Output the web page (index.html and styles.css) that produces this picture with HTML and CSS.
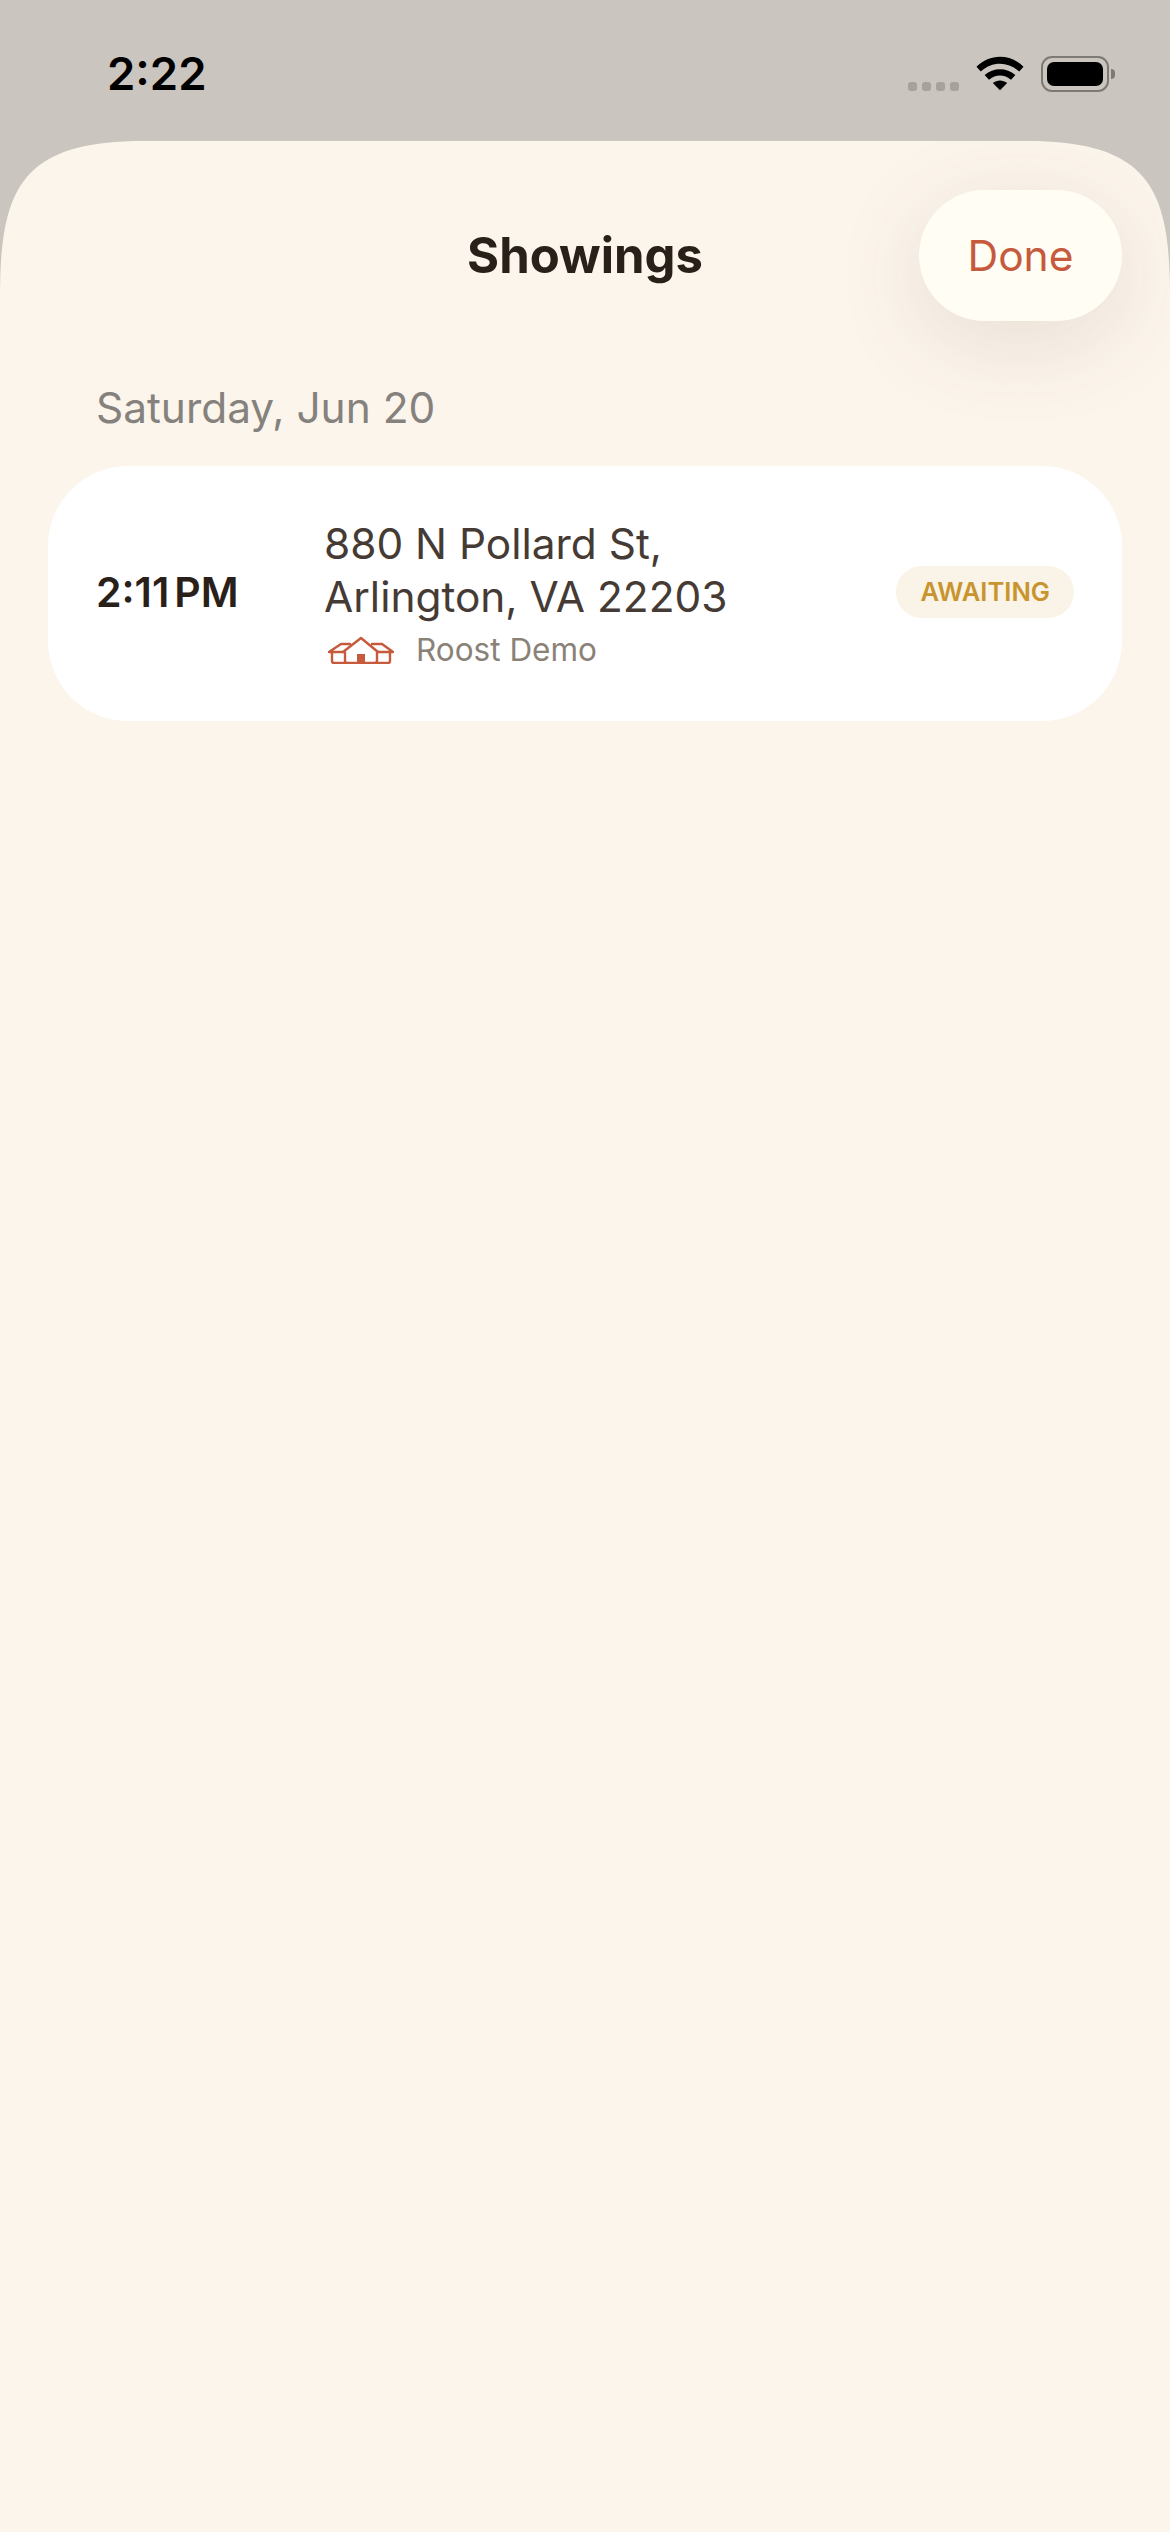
FILE: index.html
```html
<!DOCTYPE html>
<html lang="en">
<head>
    <meta charset="UTF-8">
    <meta name="viewport" content="width=device-width, initial-scale=1.0">
    <title>Showings</title>
    <link rel="stylesheet" href="styles.css">
</head>
<body>
    <div class="status-bar">
        <span class="status-time">2:22</span>
        <div class="status-icons">
            <div class="signal-dots">
                <span></span><span></span><span></span><span></span>
            </div>
            <svg class="wifi" width="48" height="36" viewBox="0 0 50 36">
                <path d="M0.5 11.5 C14 -2.5 36 -2.5 49.5 11.5 L45 16.5 C33.5 5.5 16.500 5.500 5 16.500 Z" fill="#000"/>
                <path d="M9 20 C18 12 32 12 41 20 L36.500 25 C29.500 19 20.500 19 13.500 25 Z" fill="#000"/>
                <path d="M17.500 28.500 C22 25 28 25 32.500 28.500 L25 36 Z" fill="#000"/>
            </svg>
            <div class="battery">
                <div class="battery-body"><div class="battery-level"></div></div>
                <div class="battery-cap"></div>
            </div>
        </div>
    </div>

    <main class="sheet">
        <header class="sheet-header">
            <h1 class="sheet-title">Showings</h1>
            <button class="done-btn" type="button">Done</button>
        </header>

        <h2 class="date-label">Saturday, Jun 20</h2>

        <section class="showing-card">
            <div class="showing-time">2:11<span class="time-suffix">PM</span></div>
            <div class="showing-info">
                <div class="showing-address">880 N Pollard St,<br>Arlington, VA 22203</div>
                <div class="showing-client">
                    <svg class="house-icon" width="66" height="28" viewBox="0 0 66 28">
                        <g fill="none" stroke="#c55a3c" stroke-width="2.4" stroke-linecap="round" stroke-linejoin="round">
                            <path d="M15 16 H1 L13 8 H22"/>
                            <path d="M44 8 H54 L65 16 H50"/>
                            <path d="M15 16 L33 2 L50 16"/>
                            <path d="M4 16 V25 Q4 27 6 27 H60 Q62 27 62 25 V16"/>
                            <path d="M17 16 V25 Q17 27 19 27"/>
                            <path d="M49 16 V25 Q49 27 47 27"/>
                        </g>
                        <rect x="29" y="18" width="8" height="9" fill="#c55a3c"/>
                    </svg>
                    <span class="client-name">Roost Demo</span>
                </div>
            </div>
            <span class="status-pill">AWAITING</span>
        </section>
    </main>
</body>
</html>
```

FILE: styles.css
```css
/* page */
body {
    margin: 0;
    width: 1170px;
    height: 2532px;
    overflow: hidden;
    background-color: #cac5bf;
    font-family: 'Inter', 'Liberation Sans', sans-serif;
    display: flex;
    flex-direction: column;
}

/* status bar */
.status-bar {
    height: 141px;
    flex-shrink: 0;
    display: flex;
    justify-content: space-between;
    align-items: flex-start;
    box-sizing: border-box;
    padding: 46px 55px 0 107px;
}

.status-time {
    font-size: 45.5px;
    font-weight: 600;
    line-height: 56px;
    color: #000;
}

.status-icons {
    display: flex;
    align-items: flex-start;
}

.signal-dots {
    display: flex;
    gap: 5px;
    margin: 36px 17px 0 0;
}

.signal-dots span {
    width: 9px;
    height: 9px;
    border-radius: 3px;
    background-color: #a5a19b;
}

.wifi {
    margin: 9px 17px 0 0;
}

.battery {
    display: flex;
    align-items: center;
    margin-top: 10px;
}

.battery-body {
    width: 68px;
    height: 36px;
    box-sizing: border-box;
    border: 2px solid #7d7973;
    border-radius: 11px;
    padding: 4px;
}

.battery-level {
    height: 100%;
    background-color: #000;
    border-radius: 7px;
}

.battery-cap {
    width: 4px;
    height: 10px;
    margin-left: 2px;
    background-color: #7d7973;
    border-radius: 0 4px 4px 0;
}

/* sheet */
.sheet {
    flex: 1;
    background-color: #fcf5ec;
    clip-path: path('M0 156 C0 49 20 0 143 0 H1027 C1150 0 1170 49 1170 156 V2391 H0 Z');
    padding: 49px 48px 0;
}

.sheet-header {
    display: grid;
    grid-template-columns: 1fr auto 1fr;
    align-items: center;
}

.sheet-title {
    grid-column: 2;
    margin: 0;
    font-size: 49px;
    font-weight: 700;
    color: #2a201a;
}

.done-btn {
    grid-column: 3;
    justify-self: end;
    width: 203px;
    height: 131px;
    border: none;
    border-radius: 66px;
    background-color: #fffdf4;
    color: #c55a3c;
    font-family: inherit;
    font-size: 42.5px;
    box-shadow: 0 20px 90px rgba(90, 70, 50, 0.13);
}

.date-label {
    margin: 60px 0 0 48px;
    font-size: 42.4px;
    font-weight: 400;
    line-height: 54px;
    color: #85817c;
}

/* card */
.showing-card {
    margin-top: 31px;
    height: 255px;
    box-sizing: border-box;
    padding: 0 48px 3px;
    background-color: #fff;
    border-radius: 80px;
    display: flex;
    align-items: center;
}

.showing-time {
    width: 228px;
    flex-shrink: 0;
    font-size: 41px;
    font-weight: 600;
    color: #2a201a;
}

.time-suffix {
    margin-left: 5px;
}

.showing-info {
    flex: 1;
    margin-top: 5px;
}

.showing-address {
    font-size: 42.4px;
    line-height: 53px;
    color: #453b34;
}

.showing-client {
    display: flex;
    align-items: center;
    gap: 22px;
    margin: 4px 0 0 4px;
}

.client-name {
    font-size: 31.5px;
    line-height: 46px;
    color: #8a8177;
}

.status-pill {
    height: 52px;
    box-sizing: border-box;
    padding: 0 24px;
    background-color: #f9f3e8;
    border-radius: 26px;
    font-size: 25.6px;
    font-weight: 600;
    line-height: 52px;
    color: #c9942e;
}
```
